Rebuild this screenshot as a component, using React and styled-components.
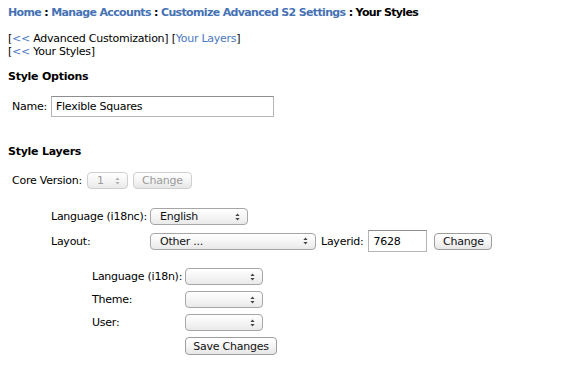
import React from "react";
import styled, { createGlobalStyle } from "styled-components";

const Global = createGlobalStyle`
  html, body { margin: 0; padding: 0; background: #fff; }
  body {
    font-family: "DejaVu Sans", "Liberation Sans", sans-serif;
    font-size: 11px;
    letter-spacing: -0.25px;
    color: #000;
  }
`;

const Page = styled.div`
  padding: 6px 8px;
`;

const Crumbs = styled.div`
  font-weight: bold;
  line-height: 14px;
  letter-spacing: -0.65px;
`;

const Link = styled.a`
  color: ${(p) => (p.$bold ? "#4672b4" : "#4a78bf")};
  text-decoration: none;
`;

const NavLinks = styled.div`
  margin-top: 12px;
  line-height: 13px;
`;

const SectionTitle = styled.div`
  font-weight: bold;
  line-height: 14px;
  margin-top: ${(p) => p.$mt}px;
`;

const Row = styled.div`
  display: flex;
  align-items: center;
  gap: ${(p) => p.$gap ?? 4}px;
  margin-top: ${(p) => p.$mt ?? 0}px;
  padding-left: ${(p) => p.$indent ?? 0}px;
  height: ${(p) => p.$h ?? 17}px;
`;

const TextInput = styled.div`
  box-sizing: border-box;
  width: ${(p) => p.$w}px;
  height: ${(p) => p.$h}px;
  border: 1px solid #b5b5b5;
  border-top-color: #8e8e8e;
  padding: 0 4px;
  display: flex;
  align-items: center;
  background: #fff;
`;

const SelectBox = styled.div`
  box-sizing: border-box;
  width: ${(p) => p.$w}px;
  height: 17px;
  border: 1px solid ${(p) => (p.$disabled ? "#cfcfcf" : "#a6a6a6")};
  border-radius: 4px;
  background: linear-gradient(#ffffff, #f3f3f3 60%, #e9e9e9);
  color: ${(p) => (p.$disabled ? "#9a9a9a" : "#111")};
  display: flex;
  align-items: center;
  justify-content: space-between;
  padding: 0 7px 0 9px;
  line-height: 15px;
`;

const Button = styled.div`
  box-sizing: border-box;
  height: ${(p) => p.$h ?? 17}px;
  width: ${(p) => p.$w}px;
  border: 1px solid ${(p) => (p.$disabled ? "#cfcfcf" : "#9d9d9d")};
  border-radius: 4px;
  background: linear-gradient(#ffffff, #f4f4f4 55%, #e6e6e6);
  color: ${(p) => (p.$disabled ? "#9a9a9a" : "#111")};
  display: flex;
  align-items: center;
  justify-content: center;
  margin-left: ${(p) => p.$ml ?? 0}px;
`;

const Grid = styled.div`
  display: grid;
  grid-template-columns: ${(p) => p.$col}px auto;
  align-items: center;
  row-gap: ${(p) => p.$gap}px;
  padding-left: ${(p) => p.$indent}px;
  margin-top: ${(p) => p.$mt}px;
`;

const Inline = styled.div`
  display: flex;
  align-items: center;
  gap: 5px;
`;

const Label = styled.span`
  white-space: nowrap;
`;

const Arrows = ({ color }) => (
  <svg width="5" height="8" viewBox="0 0 5 8">
    <path d="M2.5 0.5 L4.6 3 L0.4 3 Z" fill={color} />
    <path d="M2.5 7.5 L4.6 5 L0.4 5 Z" fill={color} />
  </svg>
);

const Select = ({ w, value, disabled }) => (
  <SelectBox $w={w} $disabled={disabled}>
    <span>{value}</span>
    <Arrows color={disabled ? "#b0b0b0" : "#444"} />
  </SelectBox>
);

export default function App() {
  return (
    <>
      <Global />
      <Page>
        <Crumbs>
          <Link $bold href="#">Home</Link> : <Link $bold href="#">Manage Accounts</Link> :{" "}
          <Link $bold href="#">Customize Advanced S2 Settings</Link> : Your Styles
        </Crumbs>
        <NavLinks>
          <div>
            [<Link href="#">&lt;&lt;</Link> Advanced Customization] [<Link href="#">Your Layers</Link>]
          </div>
          <div>
            [<Link href="#">&lt;&lt;</Link> Your Styles]
          </div>
        </NavLinks>
        <SectionTitle $mt={12}>Style Options</SectionTitle>
        <Row $mt={12} $indent={4} $h={20} $gap={4}>
          <Label>Name:</Label>
          <TextInput $w={223} $h={21}>Flexible Squares</TextInput>
        </Row>
        <SectionTitle $mt={29}>Style Layers</SectionTitle>
        <Row $mt={13} $indent={4} $gap={5}>
          <Label>Core Version:</Label>
          <Select w={41} value="1" disabled />
          <Button $w={59} $disabled>Change</Button>
        </Row>
        <Grid $col={99} $gap={5} $indent={43} $mt={19}>
          <Label>Language (i18nc):</Label>
          <Select w={98} value="English" />
          <Label>Layout:</Label>
          <Inline>
            <Select w={166} value="Other ..." />
            <Label>Layerid:</Label>
            <TextInput $w={59} $h={22}>7628</TextInput>
            <Button $w={58} $ml={2}>Change</Button>
          </Inline>
        </Grid>
        <Grid $col={93} $gap={6} $indent={84} $mt={16}>
          <Label>Language (i18n):</Label>
          <Select w={78} />
          <Label>Theme:</Label>
          <Select w={78} />
          <Label>User:</Label>
          <Select w={78} />
          <span />
          <Button $w={92} $h={18}>Save Changes</Button>
        </Grid>
      </Page>
    </>
  );
}
